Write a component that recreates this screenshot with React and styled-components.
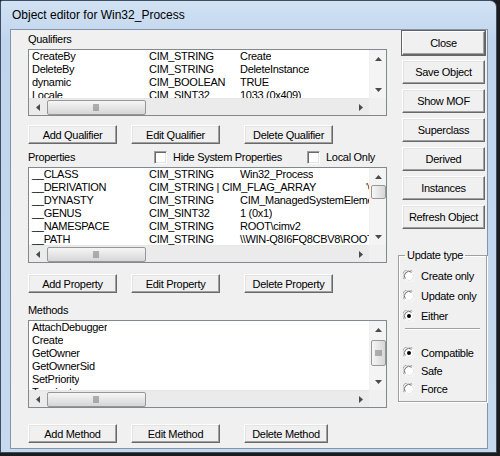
import styled, { createGlobalStyle } from "styled-components";

const GlobalStyle = createGlobalStyle`
  html, body { margin: 0; padding: 0; background: #1c1c1c; }
  body {
    font-family: "Liberation Sans", Arial, sans-serif;
    font-size: 11px;
    letter-spacing: -0.3px;
    color: #000;
  }
`;

const Window = styled.div`
  width: 497px;
  height: 453px;
  box-sizing: border-box;
  border: 1px solid #3d4e63;
  border-top-right-radius: 7px;
  border-top-left-radius: 2px;
  background: linear-gradient(180deg, #d2e2f4 0px, #c0d5ed 40px, #c6d9ef 100%);
  display: flex;
  flex-direction: column;
  padding: 0 8px 3px 9px;
`;

const TitleBar = styled.div`
  height: 28px;
  display: flex;
  align-items: center;
  padding-left: 2px;
  font-size: 12px;
  letter-spacing: 0;
  color: #000;
`;

const Client = styled.div`
  flex: 1;
  display: flex;
  background: #f0f0f0;
  border: 1px solid #8294aa;
`;

const LeftCol = styled.div`
  width: 359px;
  padding: 3px 0 0 17px;
  display: flex;
  flex-direction: column;
`;

const RightCol = styled.div`
  width: 89px;
  margin-left: 11px;
  padding-top: 1px;
  display: flex;
  flex-direction: column;
`;

const Label = styled.div`
  height: 13px;
  line-height: 13px;
  margin-top: ${(p) => p.$mt || 0}px;
`;

const ListBox = styled.div`
  margin-top: ${(p) => p.$mt || 3}px;
  width: 359px;
  height: ${(p) => p.$h}px;
  box-sizing: border-box;
  border: 1px solid #828790;
  background: #fff;
  display: grid;
  grid-template-columns: 1fr 17px;
  grid-template-rows: 1fr 17px;
  overflow: hidden;
`;

const Rows = styled.div`
  overflow: hidden;
  min-height: 0;
`;

const Row = styled.div`
  height: 13px;
  line-height: 13px;
  display: flex;
  white-space: nowrap;
`;

const Cell = styled.span`
  flex: none;
  width: ${(p) => (p.$w ? `${p.$w}px` : "auto")};
  padding-left: 3px;
  box-sizing: border-box;
  overflow: hidden;
`;

const VScroll = styled.div`
  background: #f4f4f4;
  border-left: 1px solid #f0f0f0;
  display: flex;
  flex-direction: column;
  min-height: 0;
`;

const HScroll = styled.div`
  background: #ebebeb;
  border-top: 1px solid #e6e6e6;
  display: flex;
  align-items: center;
`;

const Corner = styled.div`
  background: #f0f0f0;
`;

const ArrowBtn = styled.div`
  flex: none;
  width: 17px;
  height: 17px;
  display: flex;
  align-items: center;
  justify-content: center;
`;

const Track = styled.div`
  flex: 1;
  display: flex;
  flex-direction: ${(p) => (p.$vertical ? "column" : "row")};
  padding: ${(p) => (p.$vertical ? "0" : "0 0 0 1px")};
  min-height: 0;
`;

const Thumb = styled.div`
  flex: none;
  box-sizing: border-box;
  border: 1px solid #979797;
  border-radius: 2px;
  background: ${(p) =>
    p.$vertical
      ? "linear-gradient(90deg, #f6f6f6, #e6e6e6 50%, #d6d6d6)"
      : "linear-gradient(180deg, #f6f6f6, #e6e6e6 50%, #d6d6d6)"};
  width: ${(p) => (p.$vertical ? "15px" : `${p.$size}px`)};
  height: ${(p) => (p.$vertical ? `${p.$size}px` : "15px")};
  margin-left: ${(p) => (p.$vertical ? "1px" : "0")};
  margin-top: ${(p) => (p.$vertical ? `${p.$offset || 0}px` : "0")};
  display: flex;
  align-items: center;
  justify-content: center;
`;

const Arrow = ({ dir }) => {
  const vertical = dir === "up" || dir === "down";
  const pts = {
    up: "0,4 3.5,0 7,4",
    down: "0,0 3.5,4 7,0",
    left: "4,0 0,3.5 4,7",
    right: "0,0 4,3.5 0,7",
  }[dir];
  return (
    <svg width={vertical ? 7 : 4} height={vertical ? 4 : 7} viewBox={vertical ? "0 0 7 4" : "0 0 4 7"}>
      <polygon points={pts} fill="#4a4a4a" />
    </svg>
  );
};

const Grip = ({ vertical }) =>
  vertical ? (
    <svg width="7" height="7" viewBox="0 0 7 7">
      {[1, 3, 5].map((y) => (
        <rect key={y} x="0" y={y - 0.5} width="7" height="1" fill="#707070" />
      ))}
    </svg>
  ) : (
    <svg width="7" height="7" viewBox="0 0 7 7">
      {[1, 3, 5].map((x) => (
        <rect key={x} x={x - 0.5} y="0" width="1" height="7" fill="#707070" />
      ))}
    </svg>
  );

const ScrollList = ({ height, mt, rows, vthumb }) => (
  <ListBox $h={height} $mt={mt}>
    <Rows>
      {rows.map((r, i) => (
        <Row key={i}>
          {r.map((c, j) => (
            <Cell key={j} $w={c.w}>
              {c.t}
            </Cell>
          ))}
        </Row>
      ))}
    </Rows>
    <VScroll>
      <ArrowBtn>
        <Arrow dir="up" />
      </ArrowBtn>
      <Track $vertical>
        {vthumb && (
          <Thumb $vertical $size={vthumb.size} $offset={vthumb.offset}>
            {vthumb.size > 18 && <Grip vertical />}
          </Thumb>
        )}
      </Track>
      <ArrowBtn>
        <Arrow dir="down" />
      </ArrowBtn>
    </VScroll>
    <HScroll>
      <ArrowBtn>
        <Arrow dir="left" />
      </ArrowBtn>
      <Track>
        <Thumb $size={99}>
          <Grip />
        </Thumb>
      </Track>
      <ArrowBtn>
        <Arrow dir="right" />
      </ArrowBtn>
    </HScroll>
    <Corner />
  </ListBox>
);

const ButtonRow = styled.div`
  display: flex;
  margin-top: ${(p) => p.$mt}px;
`;

const Button = styled.div`
  flex: none;
  box-sizing: border-box;
  width: ${(p) => p.$w || 89}px;
  height: ${(p) => p.$h || 19}px;
  margin-left: ${(p) => p.$ml || 0}px;
  margin-top: ${(p) => p.$mt || 0}px;
  background: #f0f0f0;
  border-top: 1px solid #fff;
  border-left: 1px solid #fff;
  border-right: 1px solid #696969;
  border-bottom: 1px solid #696969;
  box-shadow: ${(p) =>
    p.$default
      ? "inset -1px -1px 0 #a0a0a0, 0 0 0 1px #646464"
      : "inset -1px -1px 0 #a0a0a0, inset 1px 1px 0 #e3e3e3"};
  display: flex;
  align-items: center;
  justify-content: center;
  white-space: nowrap;
`;

const SideButton = styled(Button)`
  width: 83px;
  height: 24px;
  margin-left: 4px;
`;

const PropHeader = styled.div`
  margin-top: 7px;
  height: 13px;
  line-height: 13px;
  display: grid;
  grid-template-columns: 126px 153px auto;
`;

const Check = styled.label`
  display: flex;
  align-items: center;
  gap: 6px;
`;

const CheckBox = styled.span`
  width: 13px;
  height: 13px;
  box-sizing: border-box;
  background: #fff;
  border-top: 1px solid #a0a0a0;
  border-left: 1px solid #a0a0a0;
  border-right: 1px solid #fff;
  border-bottom: 1px solid #fff;
  box-shadow: inset 1px 1px 0 #696969, inset -1px -1px 0 #e3e3e3;
`;

const Group = styled.fieldset`
  margin: 20px 0 0 0;
  padding: 0 6px 3px 6px;
  border: 1px solid #a0a0a0;
  box-shadow: inset 1px 1px 0 #fff, 1px 1px 0 #fff;
  min-width: 0;
`;

const Legend = styled.legend`
  padding: 0 2px;
  line-height: 13px;
  margin-left: 0;
`;

const RadioRow = styled.div`
  height: ${(p) => p.$h}px;
  margin-top: ${(p) => p.$mt || 0}px;
  display: flex;
  align-items: center;
  gap: 6px;
  margin-left: -2px;
`;

const Separator = styled.div`
  height: 0;
  margin-top: 2px;
  border-top: 1px solid #a0a0a0;
  border-bottom: 1px solid #fff;
`;

const Radio = ({ on }) => (
  <svg width="12" height="12" viewBox="0 0 12 12">
    <circle cx="6" cy="6" r="5.5" fill="#fff" />
    <path d="M1.3 9.3 A5.5 5.5 0 0 1 9.3 1.3" fill="none" stroke="#a0a0a0" strokeWidth="1" />
    <path d="M2.3 8.6 A4.5 4.5 0 0 1 8.6 2.3" fill="none" stroke="#696969" strokeWidth="1" />
    <path d="M10.7 2.7 A5.5 5.5 0 0 1 2.7 10.7" fill="none" stroke="#f4f4f4" strokeWidth="1" />
    <path d="M9.7 3.4 A4.5 4.5 0 0 1 3.4 9.7" fill="none" stroke="#e3e3e3" strokeWidth="1" />
    {on && <circle cx="6" cy="6" r="2" fill="#000" />}
  </svg>
);

const qualifiers = [
  ["CreateBy", "CIM_STRING", "Create"],
  ["DeleteBy", "CIM_STRING", "DeleteInstance"],
  ["dynamic", "CIM_BOOLEAN", "TRUE"],
  ["Locale", "CIM_SINT32", "1033 (0x409)"],
].map(([a, b, c]) => [{ t: a, w: 117 }, { t: b, w: 91 }, { t: c }]);

const properties = [
  [{ t: "__CLASS", w: 117 }, { t: "CIM_STRING", w: 91 }, { t: "Win32_Process" }],
  [{ t: "__DERIVATION", w: 117 }, { t: "CIM_STRING | CIM_FLAG_ARRAY", w: 217 }, { t: "'CIM_Process'" }],
  [{ t: "__DYNASTY", w: 117 }, { t: "CIM_STRING", w: 91 }, { t: "CIM_ManagedSystemElement" }],
  [{ t: "__GENUS", w: 117 }, { t: "CIM_SINT32", w: 91 }, { t: "1 (0x1)" }],
  [{ t: "__NAMESPACE", w: 117 }, { t: "CIM_STRING", w: 91 }, { t: "ROOT\\cimv2" }],
  [{ t: "__PATH", w: 117 }, { t: "CIM_STRING", w: 91 }, { t: "\\\\WIN-Q8I6FQ8CBV8\\ROOT\\cimv2:Win32_Process" }],
  [{ t: "__PROPERTY_COUNT", w: 117 }, { t: "CIM_SINT32", w: 91 }, { t: "45 (0x2D)" }],
];

const methods = ["AttachDebugger", "Create", "GetOwner", "GetOwnerSid", "SetPriority", "Terminate"].map((m) => [
  { t: m },
]);

const sideButtons = ["Save Object", "Show MOF", "Superclass", "Derived", "Instances", "Refresh Object"];

export default function App() {
  return (
    <>
      <GlobalStyle />
      <Window>
        <TitleBar>Object editor for Win32_Process</TitleBar>
        <Client>
          <LeftCol>
            <Label>Qualifiers</Label>
            <ScrollList height={67} rows={qualifiers} />
            <ButtonRow $mt={9}>
              <Button>Add Qualifier</Button>
              <Button $ml={14}>Edit Qualifier</Button>
              <Button $ml={24}>Delete Qualifier</Button>
            </ButtonRow>

            <PropHeader>
              <span>Properties</span>
              <Check>
                <CheckBox />
                Hide System Properties
              </Check>
              <Check>
                <CheckBox />
                Local Only
              </Check>
            </PropHeader>
            <ScrollList height={96} rows={properties} vthumb={{ size: 14, offset: 0 }} />
            <ButtonRow $mt={11}>
              <Button>Add Property</Button>
              <Button $ml={14}>Edit Property</Button>
              <Button $ml={24}>Delete Property</Button>
            </ButtonRow>

            <Label $mt={11}>Methods</Label>
            <ScrollList height={88} rows={methods} vthumb={{ size: 26, offset: 2 }} />
            <ButtonRow $mt={16}>
              <Button>Add Method</Button>
              <Button $ml={14}>Edit Method</Button>
              <Button $ml={24} $w={84}>
                Delete Method
              </Button>
            </ButtonRow>
          </LeftCol>

          <RightCol>
            <SideButton $default>Close</SideButton>
            {sideButtons.map((b) => (
              <SideButton key={b} $mt={5}>
                {b}
              </SideButton>
            ))}
            <Group>
              <Legend>Update type</Legend>
              <RadioRow $h={20} $mt={4}>
                <Radio />
                Create only
              </RadioRow>
              <RadioRow $h={20}>
                <Radio />
                Update only
              </RadioRow>
              <RadioRow $h={20}>
                <Radio on />
                Either
              </RadioRow>
              <Separator />
              <RadioRow $h={18} $mt={14}>
                <Radio on />
                Compatible
              </RadioRow>
              <RadioRow $h={18}>
                <Radio />
                Safe
              </RadioRow>
              <RadioRow $h={18}>
                <Radio />
                Force
              </RadioRow>
            </Group>
          </RightCol>
        </Client>
      </Window>
    </>
  );
}
